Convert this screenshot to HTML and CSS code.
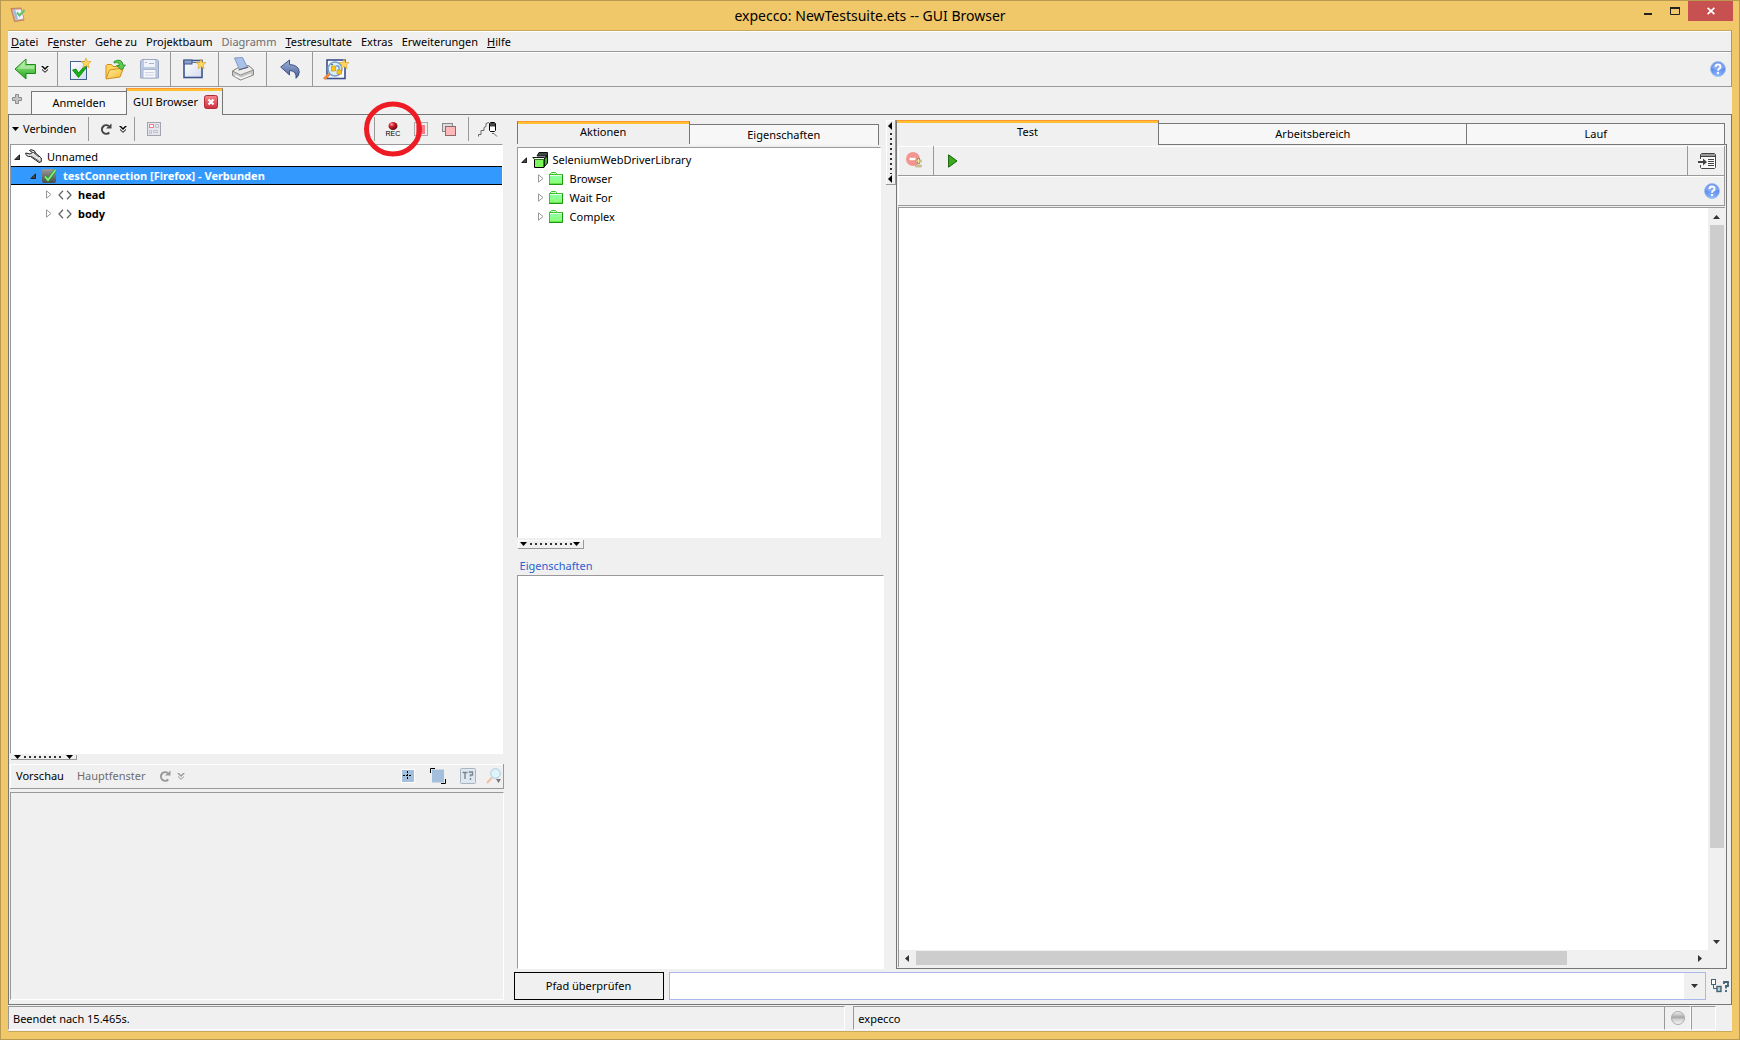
FILE: index.html
```html
<!DOCTYPE html>
<html lang="de">
<head>
<meta charset="utf-8">
<title>expecco: NewTestsuite.ets -- GUI Browser</title>
<link rel="stylesheet" href="styles.css">
</head>
<body>
<svg class="defs" width="0" height="0" aria-hidden="true">
  <defs>
    <linearGradient id="gGreen" x1="0" y1="0" x2="0" y2="1"><stop offset="0" stop-color="#b6f79a"/><stop offset="1" stop-color="#1fa51c"/></linearGradient>
    <linearGradient id="gFolder" x1="0" y1="0" x2="1" y2="1"><stop offset="0" stop-color="#fff0a0"/><stop offset="1" stop-color="#f5b62c"/></linearGradient>
    <linearGradient id="gPage" x1="0" y1="0" x2="1" y2="1"><stop offset="0" stop-color="#ffffff"/><stop offset="1" stop-color="#d3dbee"/></linearGradient>
    <linearGradient id="gUndo" x1="0" y1="0" x2="0" y2="1"><stop offset="0" stop-color="#9db0d8"/><stop offset="1" stop-color="#4a5f96"/></linearGradient>
    <linearGradient id="gLime" x1="0" y1="0" x2="0" y2="1"><stop offset="0" stop-color="#8dffb4"/><stop offset="1" stop-color="#8cff6c"/></linearGradient>
    <linearGradient id="gBox" x1="0" y1="0" x2="0" y2="1"><stop offset="0" stop-color="#9a9a9a"/><stop offset="1" stop-color="#4a4a4a"/></linearGradient>
    <linearGradient id="gClose" x1="0" y1="0" x2="0" y2="1"><stop offset="0" stop-color="#f58a8a"/><stop offset="1" stop-color="#cf2b3c"/></linearGradient>
    <radialGradient id="gRec" cx="0.35" cy="0.3" r="0.7"><stop offset="0" stop-color="#ffb0b0"/><stop offset="0.4" stop-color="#d81e2a"/><stop offset="1" stop-color="#5c0a10"/></radialGradient>
    <radialGradient id="gHelp" cx="0.5" cy="0.9" r="0.9"><stop offset="0" stop-color="#8fb9ff"/><stop offset="1" stop-color="#3d6fe0"/></radialGradient>
    <linearGradient id="gBall" x1="0" y1="0" x2="0" y2="1"><stop offset="0" stop-color="#f4f4f4"/><stop offset="0.45" stop-color="#a8a8a8"/><stop offset="0.6" stop-color="#d0d0d0"/><stop offset="1" stop-color="#f8f8f8"/></linearGradient>
  </defs>
  <symbol id="chevrons" viewBox="0 0 8 7"><path d="M0 0h2l2 2 2-2h2L4 4z" fill="currentColor"/><path d="M1 3.500L4 6.300L7 3.500" fill="none" stroke="currentColor"/></symbol>
  <symbol id="star" viewBox="0 0 10 10"><path d="M5 0l1.300 3.400 3.700.2-2.900 2.300 1 3.800L5 7.600 1.900 9.700l1-3.800L0 3.600l3.700-.2z" fill="#ffd860" stroke="#e09a1a" stroke-width=".6"/></symbol>
  <symbol id="help" viewBox="0 0 16 16"><circle cx="8" cy="8" r="7.500" fill="url(#gHelp)" stroke="#a5c4ef"/><path d="M1.500 7a6.500 6 0 0 1 13 0q-6.500 3-13 0z" fill="#fff" opacity=".25"/><path d="M5.500 6q0-2.500 2.500-2.500t2.500 2.200q0 1.300-1.400 2Q8 8.400 8 9.700M8 11v2" fill="none" stroke="#fff" stroke-width="1.900"/></symbol>
  <symbol id="open" viewBox="0 0 6 6"><path d="M6 0V6H0z" fill="#4a4a4a"/><path d="M5.500 1V5.500H1z" fill="none" stroke="#222"/></symbol>
  <symbol id="closed" viewBox="0 0 6 9"><path d="M.5 .8V8.200L5 4.500z" fill="#fff" stroke="#9a9a9a"/></symbol>
  <symbol id="folder" viewBox="0 0 14 13"><path d="M1.500 3V1.500l1-1h4l1 1V3" fill="#d8ffd0" stroke="#3cc22a"/><rect x=".5" y="2.500" width="13" height="9.500" fill="url(#gLime)" stroke="#3cc22a"/><path d="M1 3.500h12" stroke="#e5ffe0"/><path d="M13.500 3v9.500H0" fill="none" stroke="#1d9a12"/></symbol>
  <symbol id="tag" viewBox="0 0 14 10"><path d="M5 .7L1 5l4 4.300M9 .7L13 5 9 9.300" fill="none" stroke="#666" stroke-width="1.300"/></symbol>
  <symbol id="reload" viewBox="0 0 12 12"><path d="M9.300 9.500A4.300 4.300 0 1 1 8.800 3" fill="none" stroke="currentColor" stroke-width="2"/><path d="M11.500 .5v5H6z" fill="currentColor"/></symbol>
</svg>

<div class="window">
  <header class="titlebar">
    <svg class="app-icon" width="16" height="16" viewBox="0 0 16 16"><path d="M1 1.500l10-.5 3 12-9.500 1.500z" fill="#d9a58c" stroke="#b98068"/><path d="M3 3l8-.5 2.500 9-7.500 1.300z" fill="#eef3fb"/><path d="M3 3l2-1 3 10-2 1z" fill="#9fb8de"/><path d="M7 5.500l2.500 3 5-5.500" fill="none" stroke="#5cc46a" stroke-width="2"/></svg>
    <h1 class="title">expecco: NewTestsuite.ets -- GUI Browser</h1>
    <div class="winbtns">
      <button class="winbtn" aria-label="Minimieren"><svg width="10" height="10" viewBox="0 0 10 10"><path d="M1 8h8" stroke="#222" stroke-width="2"/></svg></button>
      <button class="winbtn" aria-label="Maximieren"><svg width="10" height="10" viewBox="0 0 10 10"><path d="M.5 1v7.500h9V1" fill="none" stroke="#222"/><path d="M0 2h10" stroke="#222" stroke-width="2"/></svg></button>
      <button class="winbtn winbtn-close" aria-label="Schließen"><svg width="8" height="8" viewBox="0 0 8 8"><path d="M.6 .8L7.400 7.200M7.400 .8L.6 7.200" stroke="#fff" stroke-width="1.700"/></svg></button>
    </div>
  </header>

  <nav class="menubar">
    <a href="#"><u>D</u>atei</a><a href="#">F<u>e</u>nster</a><a href="#">Gehe zu</a><a href="#">Projektbaum</a><a href="#" class="off">Diagramm</a><a href="#"><u>T</u>estresultate</a><a href="#">Extras</a><a href="#">Erweiterungen</a><a href="#"><u>H</u>ilfe</a>
  </nav>

  <div class="toolbar">
    <div class="tgroup g-back">
      <button aria-label="Zurück"><svg width="22" height="22" viewBox="0 0 22 22"><path d="M1 11L12 1v5.500h9.500v9H12V21z" fill="url(#gGreen)" stroke="#1c8a1c"/><path d="M3 11l7.500-7v4h9.500v3z" fill="#fff" opacity=".35"/></svg></button>
      <button aria-label="Verlauf"><svg width="8" height="7"><use href="#chevrons"/></svg></button>
    </div>
    <div class="tgroup g-file">
      <button aria-label="Neu"><svg width="21" height="23" viewBox="0 0 21 23"><rect x=".5" y="3.500" width="16" height="18" fill="url(#gPage)" stroke="#42618f"/><path d="M2.500 12l3.500-1 2.500 4 6-7 2 1.500-8 10z" fill="#14b314" stroke="#0b7d0b" stroke-width=".8"/><use href="#star" x="11" y="0" width="10" height="10"/></svg></button>
      <button aria-label="Öffnen"><svg width="21" height="22" viewBox="0 0 21 22"><path d="M1 20V7.500l1-1h4.500l1.500 2h8V12" fill="#ffd560" stroke="#cf8f1a"/><path d="M1 21l3.500-9 14-2-3.500 9z" fill="url(#gFolder)" stroke="#cf8f1a"/><path d="M9 3.500q8-4 9 3.500h2.500l-4 5-5-4.500h3q-1-4-5.500-2.500z" fill="#5cc84e" stroke="#258a28" stroke-width=".8"/></svg></button>
      <button aria-label="Speichern"><svg width="19" height="20" viewBox="0 0 19 20"><path d="M2 .5h15l1.500 1.500v17H.5V2z" fill="#bcc8de" stroke="#9aa8c4"/><rect x="4" y="1" width="11" height="7" fill="#f0f3fa"/><path d="M5 3.500h2M9 4.500h5" stroke="#a9b4cc"/><rect x="3" y="10.500" width="13" height="8.500" fill="#f7f8fc" stroke="#aab7d0"/><path d="M5 13.500h9M5 16h9" stroke="#ccd3e2"/></svg></button>
    </div>
    <div class="tgroup g-mid">
      <button aria-label="Neues Fenster"><svg width="23" height="20" viewBox="0 0 23 20"><rect x="1" y="1.500" width="18" height="17" fill="url(#gPage)" stroke="#3c568c" stroke-width="1.600"/><rect x="1" y="1" width="8" height="4" fill="#8ba0cc" stroke="#3c568c"/><path d="M9 3.500h9" stroke="#5b74aa"/><use href="#star" x="13" y="0" width="10" height="10"/></svg></button>
    </div>
    <div class="tgroup g-mid">
      <button aria-label="Drucken"><svg width="24" height="24" viewBox="0 0 24 24"><path d="M1.500 14l7-4 9-1.500 5 4.500v5l-13 5-8-4.500z" fill="#c9c9c6" stroke="#858585"/><path d="M1.500 14l7-4 9-1.500 5 4.500-13 5z" fill="#ececea" stroke="#8d8d8d"/><path d="M3.500 1l8-.5 5 10-8 2z" fill="#a9c0ea" stroke="#7e98c8"/><path d="M7.500 13l10-3" fill="none" stroke="#555"/><path d="M4 18.500l6 3 10-4" fill="none" stroke="#f6f6f6" stroke-width="1.500"/></svg></button>
    </div>
    <div class="tgroup g-undo">
      <button aria-label="Rückgängig"><svg width="20" height="20" viewBox="0 0 20 20"><path d="M.7 8L9.500 1v4.500Q19 6 19.200 13q0 4-3.200 6.300Q17 12 9.500 11.500V16z" fill="url(#gUndo)" stroke="#3f5388"/></svg></button>
    </div>
    <div class="tgroup g-find">
      <button aria-label="Suchen"><svg width="26" height="21" viewBox="0 0 26 21"><rect x="4" y="1" width="18" height="18.500" fill="#fff" stroke="#3a4e8c" stroke-width="1.600"/><path d="M1 20l5.500-5" stroke="#ee8a3c" stroke-width="3"/><circle cx="12" cy="10" r="7" fill="#d8f2f4" stroke="#7b9cc8" stroke-width="1.500"/><path d="M8 5.500h2M13 7h3v4" fill="none" stroke="#4a77c8"/><rect x="8.500" y="7" width="4" height="5" fill="#ffc21c" stroke="#c88a00" stroke-width=".6"/><rect x="14" y="11" width="4.500" height="4" fill="#ffc21c" stroke="#c88a00" stroke-width=".6"/><use href="#star" x="16" y="0" width="10" height="10"/></svg></button>
    </div>
    <button class="push" aria-label="Hilfe"><svg width="16" height="16"><use href="#help"/></svg></button>
  </div>

  <div class="doctabs">
    <button class="addtab" aria-label="Neuer Reiter"><svg width="10" height="10" viewBox="0 0 10 10"><path d="M3.500 .5h3v3h3v3h-3v3h-3v-3h-3v-3h3z" fill="#c4c4c4" stroke="#8c8c8c"/></svg></button>
    <button class="doctab">Anmelden</button>
    <div class="doctab doctab-on"><span>GUI Browser</span><button aria-label="Reiter schließen"><svg width="14" height="14" viewBox="0 0 14 14"><rect x=".5" y=".5" width="13" height="13" rx="2" fill="url(#gClose)" stroke="#b02a38"/><path d="M4.500 4.500l5 5M9.500 4.500l-5 5" stroke="#fff" stroke-width="2.200"/></svg></button></div>
  </div>

  <main class="work">
    <section class="left">
      <div class="lbar">
        <button class="connect"><svg width="7" height="4" viewBox="0 0 7 4"><path d="M0 0h7L3.500 4z"/></svg>Verbinden</button>
        <div class="lgroup"><button aria-label="Aktualisieren" class="dark"><svg width="12" height="12"><use href="#reload"/></svg></button><button aria-label="Optionen"><svg width="8" height="7"><use href="#chevrons"/></svg></button></div>
        <button class="grid-btn" aria-label="Elemente"><svg width="14" height="14" viewBox="0 0 14 14"><rect x=".5" y=".5" width="13" height="13" fill="#e6e6ee" stroke="#a4a4b0"/><rect x="2.500" y="2.500" width="4" height="3" fill="#fff" stroke="#f08080"/><path d="M8.500 2.500h3v3h-3zM2.500 8.500h2v3h-2zM6.500 8.500h4v2h-4z" fill="none" stroke="#c0c0cc"/></svg></button>
        <div class="rgroup push">
          <button class="rec" aria-label="REC"><svg width="10" height="8" viewBox="0 0 10 8"><ellipse cx="5" cy="4" rx="4.500" ry="4" fill="url(#gRec)"/></svg><span>REC</span></button>
          <svg class="mark" width="60" height="56" viewBox="0 0 60 56"><ellipse cx="30" cy="28" rx="26.500" ry="25" fill="none" stroke="#ed1c24" stroke-width="5"/></svg>
          <button aria-label="Stopp"><svg width="14" height="14" viewBox="0 0 14 14"><rect x=".5" y=".5" width="13" height="13" fill="#eee" stroke="#aaa"/><rect x="2" y="3" width="9" height="9" fill="#f57d86"/></svg></button>
          <button aria-label="Fenster"><svg width="14" height="13" viewBox="0 0 14 13"><rect x=".5" y=".5" width="10" height="8" fill="#ddd" stroke="#888"/><rect x="3.500" y="3.500" width="10" height="9" fill="#ffb8b8" stroke="#8a6a6a"/></svg></button>
        </div>
        <button class="path-btn" aria-label="Mausspur"><svg width="20" height="16" viewBox="0 0 20 16"><path d="M.5 15.500v-2h2.500v-4h3v-3l2-1V2.500l3-1M14 12.500h2l3 3" fill="none" stroke="#666"/><path d="M11.500 2.500l1-1h4l1 1v7l-1 1h-4l-1-1z" fill="#fff" stroke="#000"/><path d="M12 2h5v3.500h-5z" fill="#444"/></svg></button>
      </div>
      <ul class="tree ltree">
        <li class="row"><svg width="6" height="6"><use href="#open"/></svg><svg width="17" height="15" viewBox="0 0 17 15"><path d="M.7 4Q1 8 5.500 7.500L14 13.500l2.300-.8V9L11 4.500Q10 .8 6 .7L4.500 1.500 7.500 3.500 5 5z" fill="#e2e2e2" stroke="#222"/><path d="M6 7l8.500 5.500M9 4l5 4M7.500 3.500q2-1 3 1.500" stroke="#555" fill="none"/></svg><span>Unnamed</span></li>
        <li class="row lvl1 selected"><svg width="6" height="6"><use href="#open"/></svg><svg width="15" height="14" viewBox="0 0 15 14"><rect width="14" height="14" rx="2" fill="url(#gBox)"/><path d="M3 7.500l3 3.500 7.500-10" fill="none" stroke="#2c9a2c" stroke-width="3"/><path d="M3 7.500l3 3.500 7.500-10" fill="none" stroke="#8df08a" stroke-width="1.600"/></svg><span>testConnection [Firefox] - Verbunden</span></li>
        <li class="row lvl2"><svg width="6" height="9"><use href="#closed"/></svg><svg width="14" height="10"><use href="#tag"/></svg><b>head</b></li>
        <li class="row lvl2"><svg width="6" height="9"><use href="#closed"/></svg><svg width="14" height="10"><use href="#tag"/></svg><b>body</b></li>
      </ul>
      <div class="hsplit"><svg width="64" height="4" viewBox="0 0 64 4"><path d="M3 0h7L6.500 4zM55 0h7L58.500 4z"/><path d="M13 2h40" stroke="#333" stroke-width="2" stroke-dasharray="2 3"/></svg></div>
      <div class="preview-bar">
        <span>Vorschau</span><span class="off">Hauptfenster</span>
        <button class="faint" aria-label="Vorschau aktualisieren"><svg width="12" height="12"><use href="#reload"/></svg></button>
        <button class="faint chev" aria-label="Vorschauoptionen"><svg width="8" height="7"><use href="#chevrons"/></svg></button>
        <div class="pv-icons push">
          <button aria-label="Zentrieren"><svg width="16" height="16" viewBox="0 0 16 16"><rect x="1.500" y="1.500" width="13" height="13" fill="#a3bfdc" stroke="#fff"/><path d="M7.500 3v9M3 7.500h9" stroke="#000" stroke-dasharray="2 1"/></svg></button>
          <button aria-label="Einpassen"><svg width="16" height="16" viewBox="0 0 16 16"><rect x="2" y="1.500" width="12" height="13" fill="#a3bfdc"/><path d="M.5 5V.5H5M15.500 11v4.500H11" fill="none" stroke="#000"/></svg></button>
          <button aria-label="Textinfo"><svg width="16" height="16" viewBox="0 0 16 16"><rect x=".5" y=".5" width="15" height="15" rx="1" fill="#dfe8f2" stroke="#a9b4c0"/><path d="M2.500 4.500h5M5 4.500V11M9.500 5V4h3v3h-2v1.500M10.500 10v2" fill="none" stroke="#7a8590" stroke-width="1.400"/></svg></button>
          <button aria-label="Zoom"><svg width="16" height="16" viewBox="0 0 16 16"><path d="M1 15l5-5.500" stroke="#f3bfa0" stroke-width="2"/><circle cx="9.500" cy="5.500" r="4.800" fill="#def3fb" stroke="#aac8dd"/><path d="M10 11h5l-2.500 4z" fill="#777"/></svg></button>
        </div>
      </div>
      <div class="preview"></div>
    </section>

    <section class="rest">
      <div class="upper">
        <div class="mid">
          <div class="tabs mid-tabs">
            <button class="tab tab-on">Aktionen</button><button class="tab tab-props">Eigenschaften</button>
          </div>
          <ul class="tree mtree">
            <li class="row"><svg width="6" height="6"><use href="#open"/></svg><svg width="16" height="16" viewBox="0 0 16 16"><path d="M5 4l2-3.500h8.500V4z" fill="#3c4a4a" stroke="#111"/><path d="M12 7l3.500-3v7L12 15z" fill="#3fae2c" stroke="#000"/><path d="M2.500 7.500H12V15.500H2.500z" fill="#7df55c" stroke="#000"/><path d="M.5 5.500h12l3-2" fill="none" stroke="#111"/><path d="M1 6l2 1.500h9" fill="none" stroke="#2a7d1c"/></svg><span>SeleniumWebDriverLibrary</span></li>
            <li class="row lvl1"><svg width="6" height="9"><use href="#closed"/></svg><svg width="14" height="13"><use href="#folder"/></svg><span>Browser</span></li>
            <li class="row lvl1"><svg width="6" height="9"><use href="#closed"/></svg><svg width="14" height="13"><use href="#folder"/></svg><span>Wait For</span></li>
            <li class="row lvl1"><svg width="6" height="9"><use href="#closed"/></svg><svg width="14" height="13"><use href="#folder"/></svg><span>Complex</span></li>
          </ul>
          <div class="hsplit hsplit-tall"><svg width="64" height="8" viewBox="0 0 64 8"><path d="M2 2h7L5.500 6zM55 2h7L58.500 6z"/><path d="M12 4h42" stroke="#333" stroke-width="2" stroke-dasharray="2 3"/></svg></div>
          <h2 class="props-title">Eigenschaften</h2>
          <div class="props"></div>
        </div>
        <div class="vsplit"><svg width="8" height="64" viewBox="0 0 8 64"><path d="M6 2v8L2 6zM6 55v8L2 59z"/><path d="M5 13v41" stroke="#333" stroke-width="2" stroke-dasharray="2 3"/></svg></div>
        <div class="right">
          <div class="tabs right-tabs">
            <button class="tab tab-on">Test</button><button class="tab tab-area">Arbeitsbereich</button><button class="tab tab-run">Lauf</button>
          </div>
          <div class="pane">
            <div class="pbar">
              <button class="cell c-del" aria-label="Entfernen"><svg width="17" height="17" viewBox="0 0 17 17"><circle cx="7" cy="7" r="7" fill="#f29590"/><path d="M3.500 7h6" stroke="#fff" stroke-width="2.400"/><path d="M12.500 6v6M9.500 9h6M9.500 14h6" stroke="#9a9070" stroke-width="2.600"/><path d="M12.500 7v4M10 9h5M10 14h5" stroke="#ffe9a0"/></svg></button>
              <button class="c-run" aria-label="Ausführen"><svg width="10" height="14" viewBox="0 0 10 14"><path d="M.6 .8V13.200L9 7z" fill="#3bab1c" stroke="#17600a"/></svg></button>
              <button class="cell c-log push" aria-label="Protokoll"><svg width="18" height="16" viewBox="0 0 18 16"><path d="M2.500 6V1.500l1-1h13l1 1v13l-1 1h-13l-1-1V12" fill="#fafafa" stroke="#444"/><path d="M3 2h14" stroke="#999" stroke-width="2"/><path d="M3 3.500h14M10 6.500h6M10 8.500h6M10 10.500h6M10 12.500h6" stroke="#444"/><path d="M0 9h6" stroke="#444" stroke-width="2"/><path d="M5 5.500L9 9 5 12.500z" fill="#444"/></svg></button>
            </div>
            <div class="pbar2"><button class="push" aria-label="Hilfe"><svg width="16" height="16"><use href="#help"/></svg></button></div>
            <div class="canvas">
              <div class="surface"></div>
              <div class="vscroll"><button aria-label="Nach oben"><svg width="7" height="4" viewBox="0 0 7 4"><path d="M0 4h7L3.500 0z" fill="#333"/></svg></button><div class="track"><i></i></div><button aria-label="Nach unten"><svg width="7" height="4" viewBox="0 0 7 4"><path d="M0 0h7L3.500 4z" fill="#333"/></svg></button></div>
              <div class="hscroll"><button aria-label="Nach links"><svg width="4" height="7" viewBox="0 0 4 7"><path d="M4 0v7L0 3.500z" fill="#333"/></svg></button><div class="track"><i></i></div><button aria-label="Nach rechts"><svg width="4" height="7" viewBox="0 0 4 7"><path d="M0 0v7L4 3.500z" fill="#333"/></svg></button></div>
            </div>
          </div>
        </div>
      </div>
      <div class="pathrow">
        <button class="check">Pfad überprüfen</button>
        <div class="combo"><input type="text" aria-label="Pfad"><button aria-label="Liste öffnen"><svg width="7" height="4" viewBox="0 0 7 4"><path d="M0 0h7L3.500 4z" fill="#333"/></svg></button></div>
        <button class="pathhelp" aria-label="Pfad-Hilfe"><svg width="18" height="14" viewBox="0 0 18 14"><rect x=".5" y=".5" width="4" height="5" fill="#fff" stroke="#3f6478"/><path d="M2.500 6v3.500H6" fill="none" stroke="#3f6478"/><rect x="6" y="7.500" width="4" height="5" fill="#c4d0d8" stroke="#3f6478" stroke-width="1.400"/><path d="M13 5V3h4v4h-2v2.500M15 11v2" fill="none" stroke="#3f6478" stroke-width="1.800"/></svg></button>
      </div>
    </section>
  </main>

  <footer class="status">
    <div class="st st-msg">Beendet nach 15.465s.</div>
    <div class="st st-app">expecco</div>
    <div class="st st-led"><svg width="14" height="14" viewBox="0 0 14 14"><circle cx="7" cy="7" r="6.500" fill="url(#gBall)" stroke="#aaa"/></svg></div>
    <div class="st st-end"></div>
  </footer>
</div>
</body>
</html>
```

FILE: styles.css
```css
:root {
  --face: #f0f0f0;
  --shade: #999;
  --line: #777;
  --gold: #f0c869;
}
* { box-sizing: border-box; }
body {
  margin: 0;
  background: var(--gold);
  color: #000;
  font: 11px/16px "Noto Sans", "Open Sans", sans-serif;
}
button {
  margin: 0;
  padding: 0;
  border: 0;
  background: none;
  color: inherit;
  font: inherit;
}
svg { display: block; flex: none; }
.defs { position: absolute; }
.push { margin-left: auto; }
.off { color: #6d6d6d; }
.faint { color: #999; }

.window {
  display: flex;
  flex-direction: column;
  min-height: 100vh;
  padding: 0 7px 7px;
  border: 1px solid #b8994f;
}

/* title bar */
.titlebar {
  display: grid;
  grid-template-columns: 1fr auto 1fr;
  height: 29px;
  flex: none;
}
.app-icon { margin: 6px 0 0 2px; }
.title {
  margin: 0;
  font-size: 14px;
  font-weight: 400;
  line-height: 29px;
}
.winbtns { display: flex; justify-content: flex-end; align-items: flex-start; margin-right: -1px; }
.winbtn { display: grid; place-items: center; width: 27px; height: 20px; }
.winbtn-close { width: 45px; background: #c75050; }

/* menus and main tool bar */
.menubar {
  display: flex;
  gap: 9px;
  height: 22px;
  flex: none;
  padding: 2px 3px 0;
  border: solid var(--shade);
  border-width: 1px 1px 1px 0;
  border-top-color: #c9a95c;
  background: var(--face);
  box-shadow: inset 0 1px #fff;
}
.menubar a { color: #000; text-decoration: none; line-height: 18px; }
.menubar a.off { color: #6d6d6d; }
.toolbar {
  display: flex;
  align-items: stretch;
  height: 35px;
  flex: none;
  padding-right: 5px;
  border: solid var(--shade);
  border-width: 0 1px 1px 0;
  background: var(--face);
  box-shadow: inset 0 1px #fff;
}
.tgroup {
  display: flex;
  align-items: center;
  border-right: 1px solid var(--shade);
}
.g-back { gap: 5px; padding: 0 8px 0 6px; }
.g-file { gap: 14px; padding: 0 11px 0 12px; }
.g-mid { justify-content: center; width: 48px; }
.g-undo { justify-content: center; width: 46px; }
.g-find { padding-left: 10px; border: 0; }

/* document tabs */
.doctabs {
  display: flex;
  align-items: flex-end;
  height: 28px;
  flex: none;
  background: var(--face);
  box-shadow: inset 0 -1px var(--line);
}
.addtab { align-self: flex-start; padding: 7px 9px 0 4px; }
.doctab {
  display: flex;
  align-items: center;
  justify-content: center;
  width: 95px;
  height: 24px;
  border: 1px solid var(--line);
  border-right: 0;
  background: #f7f7f7;
}
.doctab-on {
  gap: 6px;
  width: 97px;
  height: 27px;
  padding-left: 2px;
  border: 0;
  border-left: 1px solid var(--line);
  border-right: 1px solid var(--line);
  border-top: 1px solid #ff9632;
  background: var(--face);
  box-shadow: inset 0 2px #ffc132;
}

/* work area */
.work {
  display: grid;
  grid-template-columns: 497fr 1226fr;
  gap: 10px;
  flex: 1;
  min-height: 0;
  padding: 2px 0 4px 1px;
  border: solid var(--line);
  border-width: 0 1px 1px 1px;
  background: var(--face);
}
.left, .rest, .mid, .right { display: flex; flex-direction: column; min-width: 0; }
.lbar { display: flex; align-items: stretch; height: 27px; flex: none; padding-bottom: 3px; }
.lbar button { display: grid; place-items: center; }
.lbar .connect { display: flex; align-items: center; justify-content: flex-start; gap: 4px; width: 79px; padding-left: 2px; border-right: 1px solid var(--shade); }
.dark { color: #444; }
.lgroup { display: flex; gap: 7px; width: 46px; justify-content: flex-end; padding-right: 7px; border-right: 1px solid var(--shade); }
.lbar .grid-btn { margin-left: 12px; }
.rgroup { position: relative; display: flex; gap: 14px; padding: 0 12px 0 11px; border: solid var(--shade); border-width: 0 1px; }
.lbar .rec { width: 14px; align-content: center; font: 7px/7px "Liberation Sans", Arial, sans-serif; }
.mark { position: absolute; left: -12px; top: -16px; pointer-events: none; z-index: 2; }
.lbar .path-btn { margin: 0 6px 0 9px; }

.tree {
  margin: 0;
  padding: 2px 0 0;
  list-style: none;
  border: 1px solid;
  border-color: var(--shade) #fff #fff var(--shade);
  background: #fff;
}
.row { display: flex; align-items: center; gap: 5px; height: 19px; padding-left: 4px; }
.ltree { flex: 613 0 0; margin-right: 1px; }
.ltree .row { padding-left: 3px; }
.ltree .lvl1 { padding-left: 19px; gap: 6px; }
.ltree .lvl2 { padding-left: 35px; gap: 6px; }
.ltree .selected {
  border: solid #000;
  border-width: 1px 0;
  background: #3399ff;
  color: #fff;
  font-weight: 700;
}
.hsplit {
  width: 66px;
  flex: none;
  margin: 1px 0 4px 1px;
  border: solid var(--shade);
  border-width: 0 1px 1px 0;
}
.preview-bar {
  display: flex;
  align-items: center;
  gap: 13px;
  height: 25px;
  flex: none;
  padding: 0 1px 0 6px;
  border: solid var(--shade);
  border-width: 0 1px 1px 0;
  box-shadow: inset 1px 1px #fff;
}
.preview-bar .chev { margin-left: -7px; }
.pv-icons { display: flex; gap: 14px; }
.pv-icons button:last-child { margin-left: -4px; }
.preview {
  flex: 208 0 0;
  margin-top: 3px;
  border: 1px solid;
  border-color: var(--shade) #fff #fff var(--shade);
}

/* centre and right */
.rest { padding-top: 3px; }
.upper {
  display: grid;
  grid-template-columns: 370fr 10px 833fr;
  flex: 1;
  min-height: 0;
  padding: 0 4px 3px 3px;
}
.tabs { display: flex; align-items: flex-start; height: 24px; flex: none; }
.tab {
  margin-top: 3px;
  height: 21px;
  padding-bottom: 1px;
  border: 1px solid var(--line);
  border-width: 1px 1px 0 0;
  background: #f7f7f7;
}
.tab-on {
  margin-top: 0;
  height: 25px;
  padding-bottom: 2px;
  border: solid var(--line);
  border-width: 1px 1px 0;
  border-top-color: #ff9632;
  background: var(--face);
  box-shadow: inset 0 2px #ffc132;
}
.mid { padding-right: 2px; }
.mid-tabs { padding: 1px 5px 0 0; }
.mid-tabs .tab-on { flex: 172; height: 23px; }
.tab-props { flex: 189; }
.mtree { flex: 389 0 0; margin: 3px 3px 0 0; }
.mtree .row { padding-left: 3px; }
.mtree .lvl1 { padding-left: 20px; }
.mtree .lvl1 span { margin-left: 2px; }
.hsplit-tall { margin: 2px 0 0 1px; box-shadow: inset 1px 1px #fff; }
.props-title { margin: 9px 0 0 3px; color: #2c5fd0; font-size: 11px; line-height: 16px; font-weight: 400; }
.props {
  flex: 395 0 0;
  margin-top: 1px;
  border: 1px solid;
  border-color: var(--shade) #fff #fff var(--shade);
  background: #fff;
}
.vsplit {
  align-self: start;
  width: 10px;
  border: solid var(--shade);
  border-width: 0 1px 1px 0;
  box-shadow: inset 1px 1px #fff;
}
.right-tabs { z-index: 1; padding-right: 2px; }
.right-tabs .tab-on { flex: 263; }
.tab-area { flex: 309; }
.tab-run { flex: 258; }
.pane {
  display: flex;
  flex-direction: column;
  flex: 1;
  padding: 1px;
  border: 1px solid var(--line);
}
.pbar, .pbar2 {
  display: flex;
  height: 30px;
  flex: none;
  border: solid var(--shade);
  border-width: 0 1px 1px 0;
  box-shadow: inset 1px 1px #fff;
}
.pbar2 { padding-right: 4px; }
.cell { display: grid; place-items: center; width: 36px; border-right: 1px solid var(--shade); }
.c-del { padding-right: 2px; }
.c-run { margin-left: 14px; }
.c-log { width: 37px; padding-left: 2px; border: 0; border-left: 1px solid var(--shade); }
.canvas {
  display: grid;
  grid-template-columns: 1fr 17px;
  grid-template-rows: 1fr 17px;
  flex: 1;
  margin-top: 1px;
  border: solid var(--shade);
  border-width: 1px 0 0 1px;
  background: var(--face);
}
.surface { background: #fff; }
.vscroll, .hscroll { display: flex; }
.vscroll { flex-direction: column; }
.vscroll button, .hscroll button { display: grid; place-items: center; width: 17px; height: 17px; flex: none; }
.track { display: flex; flex: 1; }
.vscroll .track { flex-direction: column; padding: 0 1px 0 2px; }
.hscroll .track { padding: 1px 0 2px; }
.track i { background: #cdcdcd; }
.vscroll i { height: 88%; }
.hscroll i { width: 84%; }

.pathrow { display: flex; gap: 5px; height: 28px; flex: none; }
.check { width: 150px; border: 1px solid #000; }
.combo { display: flex; flex: 1; border: 1px solid #aab8ea; background: #fff; }
.combo input { flex: 1; min-width: 0; border: 0; outline: 0; padding: 0 4px; font: inherit; background: #fff; }
.combo button { display: grid; place-items: center; width: 21px; background: var(--face); }
.pathhelp { padding-right: 2px; }

/* status bar */
.status { display: flex; height: 27px; flex: none; padding: 1px 0; background: var(--face); border-bottom: 1px solid #c9a95c; }
.st { border: 1px solid; border-color: var(--shade) #fff #fff var(--shade); padding: 0 4px; line-height: 24px; }
.st-msg { flex: 838; margin-right: 8px; }
.st-app { flex: 812; border-right-color: var(--shade); }
.st-led { width: 26px; display: grid; place-items: center; border-left: 0; }
.st-end { width: 25px; margin-right: 16px; }
```
